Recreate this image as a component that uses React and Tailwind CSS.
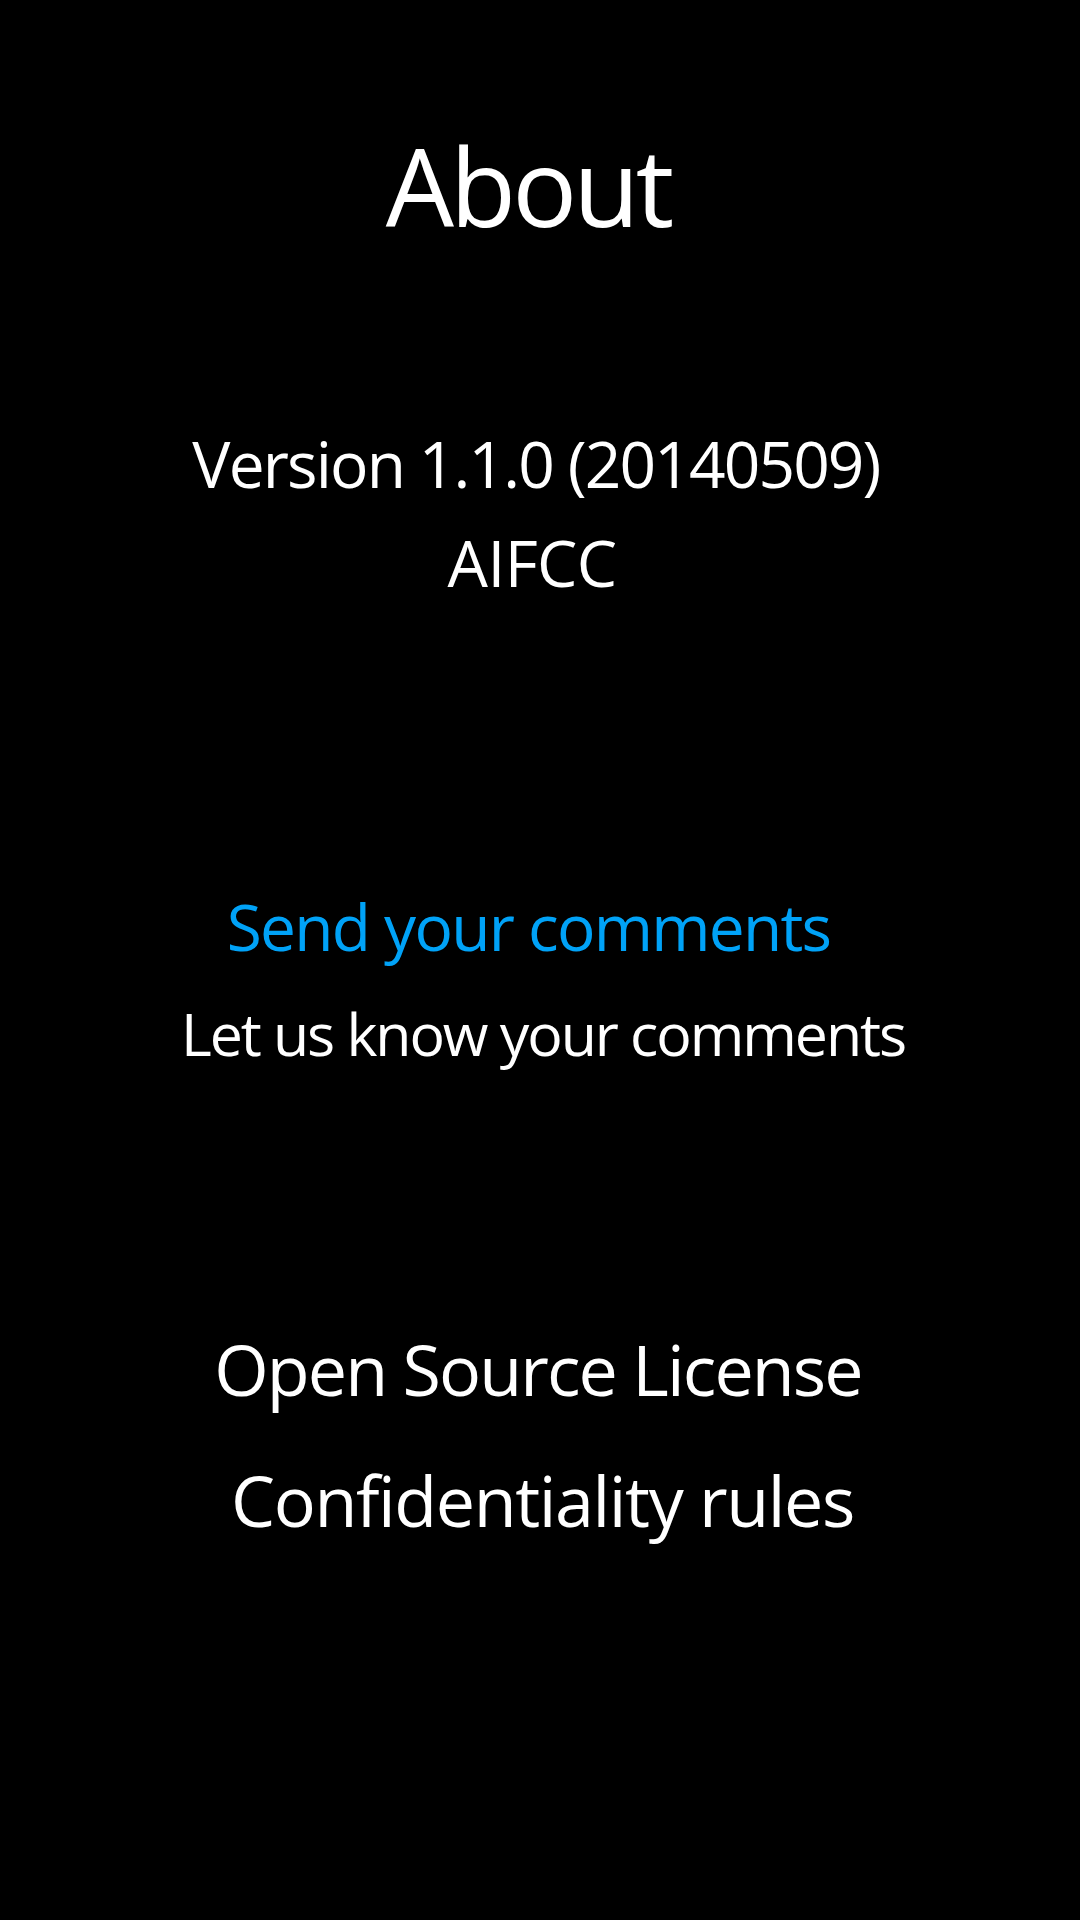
const App = () => {
  return (
    <div
      className="min-h-screen bg-black text-white flex flex-col items-center pt-[132px]"
      style={{ fontFamily: '"Open Sans", "Noto Sans", sans-serif' }}
    >
      <h1 className="text-[108px] leading-none font-normal tracking-[-0.036em] pr-[24px]">
        About
      </h1>

      <p className="mt-[192px] text-[64px] leading-none tracking-[-0.029em] pr-[8px]">
        Version 1.1.0 (20140509)
      </p>
      <p className="mt-[35px] text-[64px] leading-none tracking-[-0.01em] pr-[16px]">
        AIFCC
      </p>

      <a className="mt-[300px] text-[64px] leading-none tracking-[-0.027em] text-[#00a2f7] pr-[23px]">
        Send your comments
      </a>
      <p className="mt-[45px] text-[59px] leading-none tracking-[-0.035em] pl-[6px]">
        Let us know your comments
      </p>

      <a className="mt-[271px] text-[70px] leading-none tracking-[-0.027em] pr-[4px]">
        Open Source License
      </a>
      <a className="mt-[61px] text-[70px] leading-none tracking-[-0.02em] pl-[5px]">
        Confidentiality rules
      </a>
    </div>
  );
};

export default App;
